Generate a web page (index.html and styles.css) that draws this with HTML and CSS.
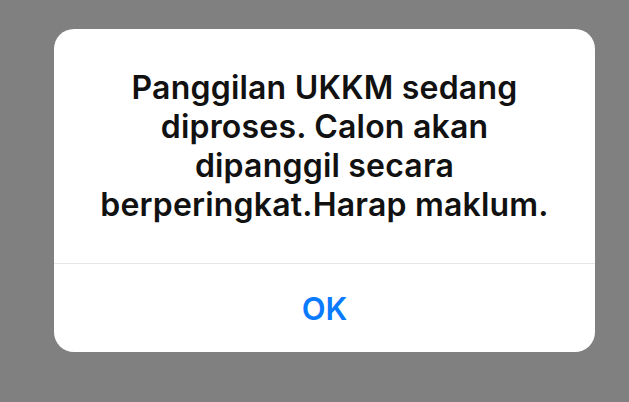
FILE: index.html
```html
<!DOCTYPE html>
<html lang="ms">
<head>
  <meta charset="UTF-8">
  <title>Makluman</title>
  <link rel="stylesheet" href="styles.css">
</head>
<body>

  <!-- Alert dialog -->
  <div class="alert">
    <div class="alert-body">
      <p class="alert-message">Panggilan UKKM sedang<br>diproses. Calon akan<br>dipanggil secara<br>berperingkat.Harap maklum.</p>
    </div>
    <button class="alert-button">OK</button>
  </div>

</body>
</html>
```

FILE: styles.css
```css
* {
  box-sizing: border-box;
}

body {
  margin: 0;
  min-height: 100vh;
  background: #808080;
  font-family: 'Inter', 'Noto Sans', sans-serif;
  padding: 29px 34px 0 54px;
}

.alert {
  width: 541px;
  background: #ffffff;
  border-radius: 20px;
  overflow: hidden;
  display: flex;
  flex-direction: column;
}

.alert-body {
  height: 235px;
  display: flex;
  align-items: center;
  justify-content: center;
  padding: 0 20px;
  border-bottom: 1px solid #e6e6e6;
}

.alert-message {
  margin: 0;
  text-align: center;
  font-size: 32px;
  font-weight: 600;
  letter-spacing: 0.2px;
  line-height: 39px;
  color: #111111;
}

.alert-button {
  height: 88px;
  border: none;
  background: none;
  font-family: inherit;
  font-size: 31px;
  font-weight: 600;
  color: #0a7aff;
  cursor: pointer;
}
```
